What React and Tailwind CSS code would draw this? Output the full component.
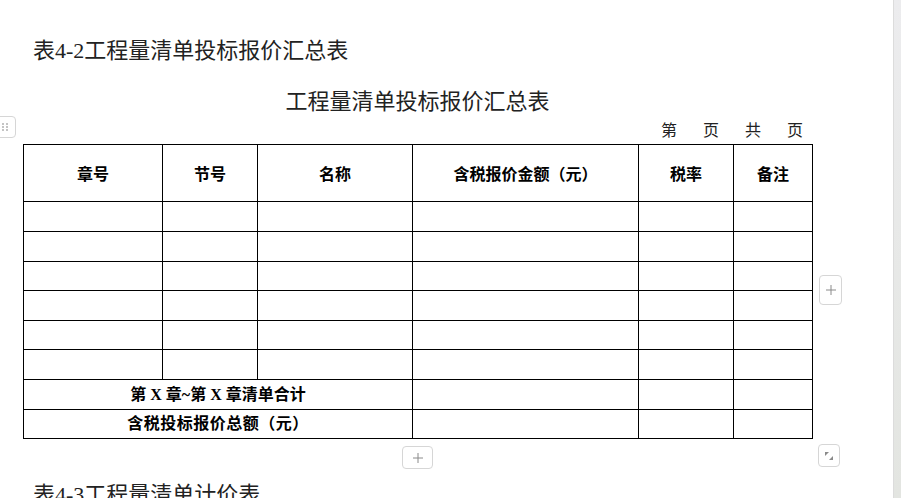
import React from 'react';

const FONT = { fontFamily: '"Liberation Serif", "Noto Sans CJK SC", serif' };

const headers = ['章号', '节号', '名称', '含税报价金额（元）', '税率', '备注'];
const colWidths = [139, 95, 155, 226, 95, 79];
const rowHeights = [30, 30, 29, 30, 29, 30];

const Cell = ({ children, className = '', ...rest }) => (
  <td className={`border border-black p-0 text-center align-middle ${className}`} {...rest}>
    {children}
  </td>
);

const SummaryTable = () => (
  <table className="border-collapse table-fixed w-[789px] text-black" style={FONT}>
    <colgroup>
      {colWidths.map((w, i) => (
        <col key={i} style={{ width: w }} />
      ))}
    </colgroup>
    <tbody>
      <tr className="h-[57px]">
        {headers.map((h) => (
          <Cell key={h} className="pt-[3px] text-[16px] font-bold">{h}</Cell>
        ))}
      </tr>
      {rowHeights.map((h, r) => (
        <tr key={r} style={{ height: h }}>
          {headers.map((_, c) => (
            <Cell key={c} />
          ))}
        </tr>
      ))}
      <tr className="h-[30px]">
        <Cell colSpan={3} className="text-[16px] font-bold">第 X 章~第 X 章清单合计</Cell>
        <Cell />
        <Cell />
        <Cell />
      </tr>
      <tr className="h-[29px]">
        <Cell colSpan={3} className="text-[16px] font-bold tracking-[0.5px]">含税投标报价总额（元）</Cell>
        <Cell />
        <Cell />
        <Cell />
      </tr>
    </tbody>
  </table>
);

const ToolButton = ({ className = '', children }) => (
  <div
    className={`flex items-center justify-center rounded-[4px] border border-[#d6d6d6] bg-white text-[#8a8a8a] ${className}`}
  >
    {children}
  </div>
);

const Plus = () => (
  <svg width="12" height="12" viewBox="0 0 12 12" fill="none" stroke="#8a8a8a" strokeWidth="1">
    <path d="M6 1v10M1 6h10" />
  </svg>
);

export default function App() {
  return (
    <div className="flex h-[498px] w-full overflow-hidden bg-white">
      <div className="relative flex-1">
        {/* drag handle */}
        <ToolButton className="absolute left-[-6px] top-[116px] h-[22px] w-[22px]">
          <svg width="8" height="10" viewBox="0 0 8 10" fill="#b0b0b0">
            <circle cx="2" cy="2" r="1" />
            <circle cx="6" cy="2" r="1" />
            <circle cx="2" cy="5" r="1" />
            <circle cx="6" cy="5" r="1" />
            <circle cx="2" cy="8" r="1" />
            <circle cx="6" cy="8" r="1" />
          </svg>
        </ToolButton>

        {/* add column */}
        <ToolButton className="absolute left-[819px] top-[275px] h-[30px] w-[23px]">
          <Plus />
        </ToolButton>

        <div className="pl-[33px] pt-[37px] text-[22px] leading-[28px] text-[#222]" style={FONT}>
          表4-2工程量清单投标报价汇总表
        </div>

        <div className="ml-[23px] w-[789px]">
          <div className="mt-[23px] text-center text-[22px] leading-[28px] text-[#222]" style={FONT}>
            工程量清单投标报价汇总表
          </div>
          <div
            className="mt-[4px] flex justify-end gap-[26px] pr-[9px] text-[16px] leading-[22px] text-[#222]"
            style={FONT}
          >
            <span>第</span>
            <span>页</span>
            <span>共</span>
            <span>页</span>
          </div>
          <div className="mt-[2px]">
            <SummaryTable />
          </div>
          <div className="relative mt-[7px] flex h-[23px] justify-center">
            <ToolButton className="h-[23px] w-[31px]">
              <Plus />
            </ToolButton>
            <ToolButton className="absolute right-[-28px] top-[-2px] h-[23px] w-[22px]">
              <svg width="12" height="12" viewBox="0 0 12 12" fill="#8a8a8a">
                <path d="M2 2h4L2 6z" />
                <path d="M10 10H6l4-4z" />
              </svg>
            </ToolButton>
          </div>
        </div>

        <div className="pl-[33px] pt-[12px] text-[22px] leading-[28px] text-[#222]" style={FONT}>
          表4-3工程量清单计价表
        </div>
      </div>
      <div className="w-[8px] border-l border-[#dcdcdc] bg-gradient-to-b from-[#ececee] to-[#e3e5e1]" />
    </div>
  );
}
